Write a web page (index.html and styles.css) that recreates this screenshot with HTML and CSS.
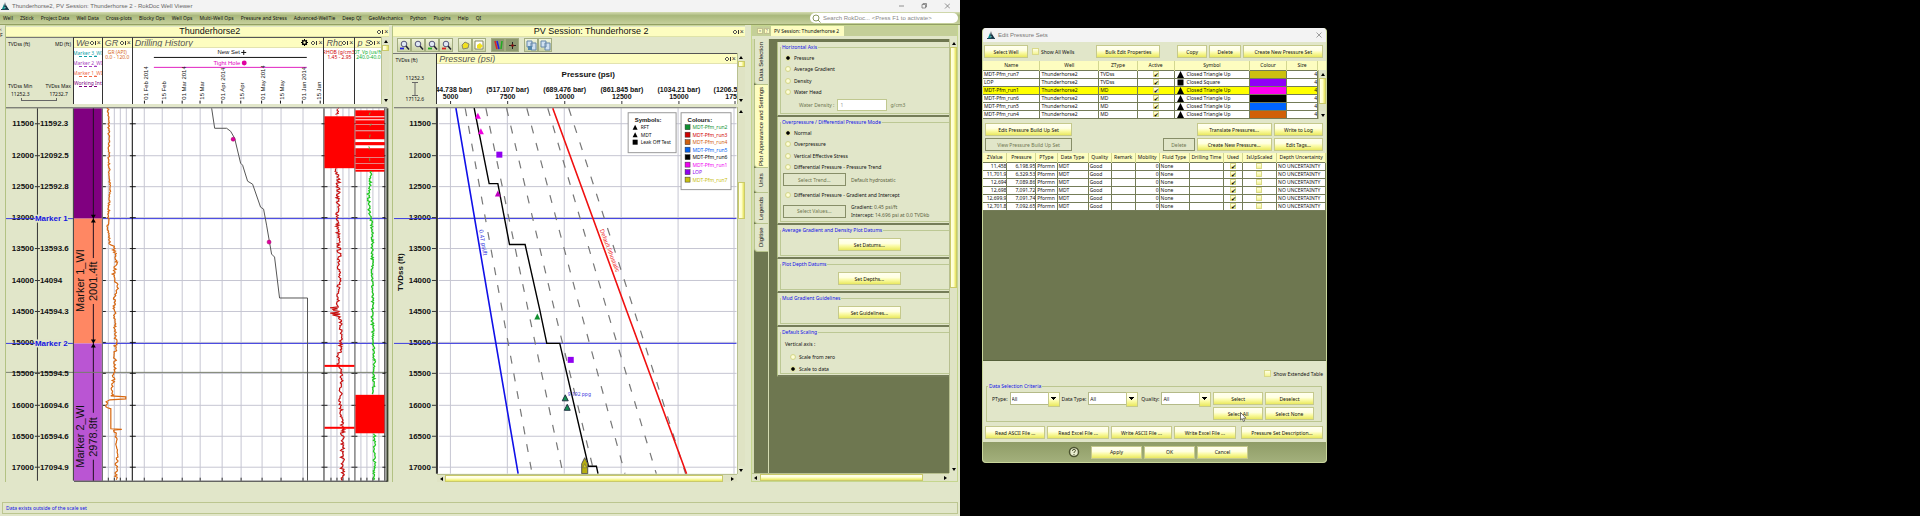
FILE: index.html
```html
<!DOCTYPE html>
<html lang="en">
<head>
<meta charset="utf-8">
<title>Thunderhorse2, PV Session: Thunderhorse 2 - RokDoc Well Viewer</title>
<link rel="stylesheet" href="styles.css">
</head>
<body>
<main class="app">
  <header class="titlebar">
    <svg class="logo" viewBox="0 0 8 8"><path d="M4 0L5 5H3Z" fill="#123"/><path d="M3 2L1 7H4Z" fill="#0a8a8a"/><path d="M5 3L7.500 7H4Z" fill="#134"/><path d="M0 7h8v1H0z" fill="#245"/></svg>
    <span class="grow">Thunderhorse2, PV Session: Thunderhorse 2 - RokDoc Well Viewer</span>
    <svg class="winctl" viewBox="0 0 52 8" fill="none" stroke="#777" stroke-width=".8"><path d="M1 4h5M24 2.500h3.500v3.500h-3.500zM25 2.500v-1h3.500v3.500h-1M47 1.500l5 5M52 1.500l-5 5"/></svg>
  </header>
  <nav class="menubar">
    <a href="#">Well</a><a href="#">ZStick</a><a href="#">Project Data</a><a href="#">Well Data</a><a href="#">Cross-plots</a><a href="#">Blocky Ops</a><a href="#">Well Ops</a><a href="#">Multi-Well Ops</a><a href="#">Pressure and Stress</a><a href="#">Advanced-WellTie</a><a href="#">Deep QI</a><a href="#">GeoMechanics</a><a href="#">Python</a><a href="#">Plugins</a><a href="#">Help</a><a href="#">QI</a>
    <label class="search"><svg viewBox="0 0 9 9" fill="none" stroke="#8a9860"><circle cx="4" cy="4" r="3"/><path d="M6 6l2.500 2.500"/></svg><input type="text" aria-label="Search" placeholder="Search RokDoc... &lt;Press F1 to activate&gt;"></label>
  </nav>
  <div class="workspace">
    <div class="gutter"><span>‹</span><span>F</span></div>
    <section class="pane well">
      <h2 class="panetitle"><span>Thunderhorse2</span><i class="ctl"></i></h2>
      <div class="wellhead">
        <div class="axishead">
          <div class="row"><span>TVDss (ft)</span><span>MD (ft)</span></div>
          <div class="row end"><span>TVDss Min</span><span>TVDss Max</span></div>
          <div class="row vals"><span>11252.3</span><span>17232.7</span></div>
          <div class="bracket"></div>
        </div>
        <div class="track"><h3>We<i class="ctl"></i></h3><div class="marks"><b class="m3">Marker 3_WI</b><b class="m2">Marker 2_WI</b><b class="m1">Marker 1_WI</b><b class="mw">Working Int</b></div></div>
        <div class="track"><h3>GR<i class="ctl"></i></h3><p class="gr">GR (API)<br>0.0 - 120.0</p></div>
        <div class="track"><h3>Drilling History<svg class="gear" viewBox="0 0 8 8"><circle cx="4" cy="4" r="2.200" fill="none" stroke="#000" stroke-width="1.600"/><path d="M4 0v8M0 4h8M1.200 1.200l5.600 5.600M6.800 1.200L1.200 6.800" stroke="#000" stroke-dasharray="1.500 5" stroke-width="1.200"/></svg><i class="ctl"></i></h3><svg class="plot" id="dates" viewBox="132 48 192 56"></svg></div>
        <div class="track"><h3>Rho<i class="ctl"></i></h3><p class="rho">RHOB (g/cm3)<br>1.45 - 2.95</p></div>
        <div class="track"><h3>p S<i class="ctl"></i></h3><p class="dt">DT_Vp (us/ft)<br>240.0-40.0</p></div>
        <div class="vbar"><i class="up"></i><i class="thumb short"></i><i class="down"></i></div>
      </div>
      <div class="wellbody"><svg class="plot" id="wellplot" viewBox="6 107 384 375"></svg></div>
    </section>
    <section class="pane pv">
      <h2 class="panetitle"><span>PV Session: Thunderhorse 2</span><i class="ctl"></i></h2>
      <div class="toolbar" id="tools"></div>
      <div class="pvhead">
        <div class="axishead narrow">
          <span>TVDss (ft)</span>
          <div class="range"><span>11252.3</span><svg viewBox="0 0 6 14" fill="none" stroke="#666"><path d="M0 .5h6M3 0v14M0 13.500h6"/></svg><span>17112.6</span></div>
        </div>
        <div class="track"><h3>Pressure (psi)<i class="ctl"></i></h3><svg class="plot" id="pvaxis" viewBox="437 64 299 40"></svg></div>
        <div class="vbar"><i class="up"></i><i class="thumb short"></i><i class="down"></i></div>
      </div>
      <div class="pvbody">
        <svg class="plot" id="pvplot" viewBox="393 107 344 367"></svg>
        <div class="vbar"><i class="up"></i><i class="space"></i><i class="thumb"></i><i class="space two"></i><i class="down"></i></div>
      </div>
      <div class="hbar pvscroll"><i class="left"></i><i class="thumb"></i><i class="rest"></i><i class="right"></i></div>
    </section>
    <section class="pane side">
      <div class="doctab"><i class="x">×</i><i class="x">?</i><span>PV Session: Thunderhorse 2</span></div>
      <div class="sidemain">
        <div class="vtabs"><button class="t1">Data Selection</button><button class="t2">Plot Appearance and Settings</button><button class="t3">Units</button><button class="t4">Legends</button><button class="t5">Digitise</button></div>
        <form class="settings">
          <fieldset class="g1"><legend>Horizontal Axis</legend>
            <label><input type="radio" name="ax" checked>Pressure</label>
            <label><input type="radio" name="ax">Average Gradient</label>
            <label><input type="radio" name="ax">Density</label>
            <label><input type="radio" name="ax">Water Head</label>
            <div class="water"><label for="wd">Water Density :</label><input id="wd" type="text" value="1" disabled><span>g/cm3</span></div>
          </fieldset>
          <fieldset class="g2"><legend>Overpressure / Differential Pressure Mode</legend>
            <label><input type="radio" name="md" checked>Normal</label>
            <label><input type="radio" name="md">Overpressure</label>
            <label><input type="radio" name="md">Vertical Effective Stress</label>
            <label><input type="radio" name="md">Differential Pressure - Pressure Trend</label>
            <div class="opt"><button type="button" class="btn off">Select Trend...</button><span>Default hydrostatic</span></div>
            <label class="tall"><input type="radio" name="md">Differential Pressure - Gradient and Intercept</label>
            <div class="opt"><button type="button" class="btn off">Select Values...</button><span><b>Gradient:</b> 0.45 psi/ft<br><b>Intercept:</b> 14.696 psi at 0.0 TVDkb</span></div>
          </fieldset>
          <fieldset class="g3"><legend>Average Gradient and Density Plot Datums</legend><button type="button" class="btn">Set Datums...</button></fieldset>
          <fieldset class="g3"><legend>Plot Depth Datums</legend><button type="button" class="btn">Set Depths...</button></fieldset>
          <fieldset class="g3"><legend>Mud Gradient Guidelines</legend><button type="button" class="btn">Set Guidelines...</button></fieldset>
          <fieldset class="g6"><legend>Default Scaling</legend><p>Vertical axis :</p>
            <label><input type="radio" name="sc">Scale from zero</label>
            <label><input type="radio" name="sc" checked>Scale to data</label>
          </fieldset>
        </form>
        <div class="vbar"><i class="up"></i><i class="thumb long"></i><i class="down"></i></div>
      </div>
      <div class="hbar sidescroll"><i class="left"></i><i class="thumb"></i><i class="rest"></i><i class="right"></i></div>
    </section>
  </div>
  <footer class="status"><p>Data exists outside of the scale set</p></footer>
</main>
<div class="desk">
  <section class="dialog">
    <header class="dlgtitle"><svg class="logo" viewBox="0 0 8 8"><path d="M4 0L5 5H3Z" fill="#123"/><path d="M3 2L1 7H4Z" fill="#0a8a8a"/><path d="M5 3L7.500 7H4Z" fill="#134"/><path d="M0 7h8v1H0z" fill="#245"/></svg><span class="grow">Edit Pressure Sets</span><svg class="close" viewBox="0 0 6 6" stroke="#888" stroke-width=".8"><path d="M.5 .5l5 5M5.500 .5l-5 5"/></svg></header>
    <div class="bar1"><button class="btn w44">Select Well</button><label class="chk"><input type="checkbox">Show All Wells</label><button class="btn w64 bulk">Bulk Edit Properties</button><button class="btn w30">Copy</button><button class="btn w32">Delete</button><button class="btn w80">Create New Pressure Set</button></div>
    <div class="sets">
      <table id="sets"><colgroup><col style="width:17%"><col style="width:17.600%"><col style="width:11.500%"><col style="width:11%"><col style="width:22.600%"><col style="width:11%"><col></colgroup>
        <thead><tr><th>Name</th><th>Well</th><th>ZType</th><th>Active</th><th>Symbol</th><th>Colour</th><th>Size</th></tr></thead>
        <tbody></tbody></table>
      <div class="vbar"><i class="up"></i><i class="thumb"></i><i class="space"></i><i class="down"></i></div>
    </div>
    <div class="bar2">
      <button class="btn">Edit Pressure Build Up Set</button><button class="btn c3">Translate Pressures...</button><button class="btn">Write to Log</button>
      <button class="btn off">View Pressure Build Up Set</button><button class="btn off c2">Delete</button><button class="btn">Create New Pressure...</button><button class="btn">Edit Tags...</button>
    </div>
    <div class="data">
      <table id="data"><colgroup><col style="width:7%"><col style="width:8.400%"><col style="width:6.200%"><col style="width:9.100%"><col style="width:6.700%"><col style="width:7%"><col style="width:7%"><col style="width:8.800%"><col style="width:10%"><col style="width:5.500%"><col style="width:10%"><col></colgroup>
        <thead><tr><th>ZValue</th><th>Pressure</th><th>PType</th><th>Data Type</th><th>Quality</th><th>Remark</th><th>Mobility</th><th>Fluid Type</th><th>Drilling Time</th><th>Used</th><th>IsUpScaled</th><th>Depth Uncertainty</th></tr></thead>
        <tbody></tbody></table>
    </div>
    <div class="ext"><label class="chk"><input type="checkbox">Show Extended Table</label></div>
    <fieldset class="crit"><legend>Data Selection Criteria</legend>
      <label>PType: <span class="sel"><select><option>All</option></select></span></label>
      <label>Data Type: <span class="sel"><select><option>All</option></select></span></label>
      <label>Quality: <span class="sel"><select><option>All</option></select></span></label>
      <button class="btn">Select</button><button class="btn">Deselect</button>
      <button class="btn hover">Select All<svg class="cursor" viewBox="0 0 7 10"><path d="M.5 .5v7.500l1.700-1.500 1.200 3 1.300-.6-1.200-2.700h2.500z" fill="#fff" stroke="#444" stroke-width=".7"/></svg></button><button class="btn">Select None</button>
    </fieldset>
    <div class="files"><button class="btn">Read ASCII File ...</button><button class="btn">Read Excel File ...</button><button class="btn">Write ASCII File ...</button><button class="btn">Write Excel File ...</button><button class="btn wide">Pressure Set Description...</button></div>
    <footer class="dlgfoot"><svg class="help" viewBox="0 0 12 12"><circle cx="6" cy="6" r="4.500" fill="#e8ecd0" stroke="#4c5430" stroke-width="1.500"/><path d="M4.500 5q0-1.700 1.500-1.700T7.500 4.700Q7.500 5.500 6 6.300v.7M6 8v1" fill="none" stroke="#4c5430"/></svg><button class="btn">Apply</button><button class="btn">OK</button><button class="btn">Cancel</button></footer>
  </section>
</div>
<script src="script.js"></script>
</body>
</html>
```
FILE: styles.css
```css
:root {
  --panel: #e1e6c9;
  --dark: #6e7750;
  --edge: #b3c283;
  --cream: #fdfdc0;
  --ui: "Noto Sans", "Open Sans", sans-serif;
  --plot: "Liberation Sans", Arial, sans-serif;
  --yellow: linear-gradient(#fffff0, #ffffe0 40%, #fafaa0 65%, #e9e860);
}
* { box-sizing: border-box; }
body { margin: 0; background: #000; display: flex; min-height: 100vh; font: 5px/8px var(--ui); color: #111; }
h2, h3, p { margin: 0; font-weight: normal; }
button, input, select { font: inherit; color: inherit; margin: 0; padding: 0; }
i { font-style: normal; }
a { color: inherit; text-decoration: none; }
.grow { flex: 1; }
.app { flex: 0 0 50%; min-width: 0; display: flex; flex-direction: column; background: var(--panel); height: 100vh; }
.titlebar { flex: 0 0 12px; display: flex; align-items: center; gap: 3px; padding: 0 10px 0 1px; background: #f3f3f3; color: #666; font: 6px/8px var(--plot); }
.logo { width: 8px; height: 8px; }
.winctl { width: 52px; height: 8px; }
.menubar { flex: 0 0 13px; display: flex; align-items: center; gap: 7px; padding: 0 2px 0 3px; background: linear-gradient(#d5dcb2, #a9b87c 30%, #c6d09c); white-space: nowrap; border-bottom: 1px solid #93a064; }
.search { margin-left: auto; width: 148px; height: 10px; display: flex; align-items: center; gap: 2px; padding: 0 2px; border-radius: 5px; background: #fff; }
.search svg { width: 9px; height: 9px; }
.search input { flex: 1; min-width: 0; border: 0; background: none; font: 6px/8px var(--plot); }
.search input::placeholder { color: #888; opacity: 1; }
.workspace { flex: 1; min-height: 0; display: flex; padding-right: 2px; }
.gutter { flex: 0 0 5px; display: flex; flex-direction: column; line-height: 6px; padding-top: 1px; }
.pane { min-width: 0; display: flex; flex-direction: column; padding-top: 2px; border-top: 1px solid #c9d69b; }
.well { flex: 385 1 0; border-left: 1px solid var(--edge); }
.pv { flex: 353 1 0; margin-left: 3px; border-left: 1px solid var(--edge); }
.side { flex: 206 1 0; margin-left: 6px; border: 1px solid #c5d68e; }
.well, .pv { padding-top: 1px; }
.panetitle { flex: 0 0 10px; background: var(--cream); font: 9px/9px var(--plot); color: #111; display: flex; justify-content: center; position: relative; border-bottom: 1px solid #dfe3a8; padding-left: 24px; }
.pv .panetitle { padding-left: 44px; }
.ctl { position: absolute; right: 1px; top: 3px; width: 11px; height: 4px; background: linear-gradient(#333, #333) 5px 0/1px 4px no-repeat, radial-gradient(circle, transparent 1px, #555 1px, #555 2px, transparent 2px) 0 0/4px 4px no-repeat; }
.ctl::after { content: "×"; position: absolute; right: 0; top: -2px; font: 7px/7px var(--plot); color: #333; }
.wellhead { flex: 0 0 67px; display: grid; grid-template-columns: 67fr 29fr 30fr 192fr 31fr 27fr 8fr; }
.axishead { padding: 2px 2px 0 2px; border-top: 1px solid #777; display: flex; flex-direction: column; }
.row { display: flex; justify-content: space-between; }
.end { margin-top: auto; }
.vals { padding: 0 3px; }
.bracket { height: 3px; margin: 0 14px 3px 13px; border: solid #666; border-width: 0 1px 1px; }
.track { min-width: 0; overflow: hidden; background: #fff; border-left: 1px solid #333; border-top: 1px solid #555; }
.track h3 { height: 10px; background: var(--cream); color: #555; font: italic 9px/11px var(--plot); position: relative; padding-left: 2px; white-space: nowrap; overflow: hidden; border-bottom: 1px solid #e3e3b0; }
.track h3 .ctl { background-color: var(--cream); }
.gear { position: absolute; right: 15px; top: 1px; width: 7px; height: 7px; }
.track p { line-height: 5px; white-space: nowrap; padding-top: 2px; display: flow-root; }
.track p, .marks { margin: 0 -12px; text-align: center; }
.gr { color: #d86820; }
.rho { color: #d00000; }
.dt { color: #10b030; }
.marks { padding-top: 1px; }
.marks b { display: block; font-weight: normal; height: 8px; margin-bottom: 2px; }
.marks b::after { content: ""; display: block; width: 18px; margin: -1px auto 0; border-top: 1px dashed; }
.m3 { color: #10a0a8; } .m2 { color: #a840c0; } .m1 { color: #f06848; } .mw { color: #800080; }
.plot { display: block; width: 100%; font-family: var(--plot); }
.plot .small { font: 5px var(--ui); }
.wellbody { flex: 1; min-height: 0; margin-top: 3px; }
.wellbody .plot, .pvbody .plot { height: 100%; }
.vbar { display: flex; flex-direction: column; background: #dfe3c4; border-left: 1px solid #b8c090; }
.up, .down { flex: 0 0 8px; background: var(--panel); display: grid; place-items: center; }
.up::after, .down::after { content: ""; border: solid transparent; border-width: 0 2px 3px; border-bottom-color: #000; }
.down::after { transform: rotate(180deg); }
.thumb { border: 1px solid #c9c96a; background: linear-gradient(90deg, #ffffe8, #ffffc8 50%, #e6e258); }
.short { flex: 0 0 6px; margin-bottom: auto; }
.toolbar { flex: 0 0 16px; display: flex; align-items: center; padding: 0 0 0 4px; }
.toolbar button { width: 14px; height: 14px; border: 1px solid #a3ad80; background: linear-gradient(#f2f5dc, #c9d2a4); display: grid; place-items: center; }
.toolbar button.gap { margin-left: 5px; }
.toolbar button.on { background: #8e9970; }
.toolbar svg { width: 11px; height: 11px; }
.pvhead { flex: 0 0 51px; display: grid; grid-template-columns: 43fr 301fr 8fr; }
.narrow .range { display: flex; flex-direction: column; align-items: center; line-height: 7px; margin-top: auto; padding-bottom: 1px; }
.range svg { width: 6px; height: 14px; }
.pvbody { flex: 1; min-height: 0; margin-top: 3px; display: grid; grid-template-columns: 344fr 8fr; }
.space { flex: 7 1 0; }
.pvbody .space { flex: 67 1 0; }
.pvbody .space.two { flex: 248 1 0; }
.pvbody .thumb { flex: 35 1 0; }
.hbar { flex: 0 0 8px; display: flex; background: #dfe3c4; border-top: 1px solid #b8c090; }
.hbar .thumb { background: var(--yellow); }
.left, .right { flex: 0 0 8px; display: grid; place-items: center; }
.left::after, .right::after { content: ""; border: solid transparent; border-width: 2px 3px 2px 0; border-right-color: #000; }
.right::after { transform: rotate(180deg); }
.pvscroll { margin: 0 8px 0 44px; }
.pvscroll .thumb { flex: 279 1 0; }
.pvscroll .rest { flex: 6 1 0; }
.sidescroll { margin-right: 8px; }
.sidescroll .thumb { flex: 163 1 0; }
.sidescroll .rest { flex: 18 1 0; }
.side { padding: 0; }
.doctab { flex: 0 0 10px; display: flex; align-items: center; gap: 1px; background: #c4cf98; }
.doctab span { background: var(--cream); padding: 0 5px 0 3px; line-height: 10px; }
.doctab::before { content: ""; width: 4px; }
.x { width: 6px; height: 6px; border: 1px solid #c0c090; background: var(--cream); line-height: 4px; text-align: center; color: #888; }
.sidemain { flex: 1; min-height: 0; display: flex; margin-top: 3px; background: var(--dark); border-left: 2px solid #d5dcb2; }
.vtabs { flex: 0 0 15px; border-right: 1px solid #d5dcb2; display: flex; flex-direction: column; }
.vtabs button { writing-mode: vertical-rl; transform: rotate(180deg); border: 1px solid #b8c48c; border-width: 1px 1px 0 0; border-radius: 0 4px 0 0; background: var(--panel); font: 6px/13px var(--plot); }
.t1 { height: 46px; } .t2 { height: 83px; } .t3 { height: 25px; } .t4 { height: 31px; } .t5 { height: 28px; }
.vtabs .t2 { background: var(--cream); }
.settings { flex: 1; min-width: 0; margin: 3px 0 0 8px; }
.sidemain .vbar { flex: 0 0 8px; }
.long { flex: 240 1 0; margin-bottom: 177px; }
fieldset { min-width: 0; margin: 0; border: 0; padding: 0; }
.settings fieldset { position: relative; background: var(--panel); border-bottom: 2px solid #747c58; border-left: 1px solid var(--edge); padding: 10px 0 0 7px; }
.settings fieldset::before { content: ""; position: absolute; left: 2px; right: 0; top: 5px; bottom: 1px; border: 1px solid #bcc894; border-right: 0; pointer-events: none; }
.settings legend { float: left; margin: -9px 0 0 -4px; padding: 0 1px; background: var(--panel); color: #1111e8; position: relative; line-height: 8px; }
.settings legend + * { clear: both; }
.settings label { display: flex; align-items: center; gap: 3px; height: 11px; margin-bottom: 0; }
.g1 { height: 75px; } .g2 { height: 108px; } .g3 { height: 34px; } .g6 { height: 50px; }
.g1 > label:nth-of-type(even), .g2 > label:nth-of-type(even) { height: 12px; }
.settings .tall { height: 17px; }
input[type=radio] { appearance: none; width: 6px; height: 6px; border-radius: 3px; background: radial-gradient(#ffffe8, #f6f6b0); border: 1px solid #d4d68e; }
input[type=radio]:checked { background: #000; border-color: #e4e6a0; background-clip: padding-box; }
.water { display: flex; align-items: center; height: 14px; gap: 3px; color: #6f7650; margin-left: 14px; }
.settings .water label { height: 12px; }
.water input { width: 50px; height: 12px; border: 1px solid #c0c890; background: #fff; padding-left: 2px; color: #999; }
.opt { display: flex; align-items: center; gap: 5px; color: #5b6240; line-height: 8px; }
.opt b { font-weight: normal; color: #222; }
.btn { height: 13px; border: 1px solid #c5c98c; background: var(--yellow); color: #111; display: block; white-space: nowrap; line-height: 10px; }
.btn.off { background: var(--panel); border-color: #878e68; color: #6f7650; }
.opt .btn { width: 63px; margin-left: -2px; }
.g3 .btn { width: 63px; margin: 3px auto 0 53px; }
.g6 p { line-height: 14px; padding-left: 0; }
.g6 label { padding-left: 5px; }
.settings .g6 label { height: 12px; }
.status { flex: 0 0 34px; padding: 20px 2px 2px; }
.status p { border: 1px solid #bcc690; height: 12px; line-height: 10px; padding-left: 3px; color: #1111e8; }
.desk { flex: 1; min-width: 0; padding: 28px 0 53px 22px; display: flex; }
.dialog { width: 36.800%; min-width: 344px; background: var(--panel); border-radius: 4px; overflow: hidden; display: flex; flex-direction: column; border: 1px solid #c9d69b; border-top: 0; }
.dlgtitle { flex: 0 0 14px; background: #f3f3f3; color: #777; font: 6px/8px var(--plot); display: flex; align-items: center; gap: 3px; padding: 0 4px; }
.close { width: 6px; height: 6px; }
.bar1 { display: flex; align-items: center; gap: 2px; padding: 3px 3px 3px 1px; }
.chk { display: flex; align-items: center; gap: 2px; }
.bar1 .chk { margin-left: 2px; }
input[type=checkbox] { appearance: none; width: 7px; height: 7px; border: 1px solid #d9d98a; background: linear-gradient(#ffffe8, #f4f490); position: relative; flex: none; }
input[type=checkbox]:checked::before { content: "✔"; position: absolute; left: 0; top: -1px; font: 6px/7px "DejaVu Sans", sans-serif; color: #000; }
.w44 { width: 44px; } .w30 { width: 30px; margin-left: auto; } .w32 { width: 32px; } .w80 { width: 80px; }
.w64 { width: 64px; } .bulk { margin-left: 20px; }
table { border-collapse: collapse; table-layout: fixed; width: 100%; background: #fff; line-height: 7px; }
th { height: 9px; background: var(--cream); font-weight: normal; border-right: 1px solid #d3d790; padding: 0; }
td { height: 8px; border: solid #747c58; border-width: 1px 1px 1px 0; padding: 0 0 0 1px; white-space: nowrap; overflow: hidden; }
th { white-space: nowrap; }
td.n { text-align: right; padding: 0; }
td.c { text-align: center; padding: 0; line-height: 0; }
td.c input { vertical-align: middle; width: 6px; height: 6px; }
td.s svg { width: 7px; height: 7px; margin: 0 3px 0 1px; vertical-align: top; }
tr.on td { background: #ffff00; }
.sets { display: grid; grid-template-columns: 334fr 8fr; background: var(--cream); height: 58px; overflow: hidden; }
.sets .vbar { margin-top: 9px; }
.sets .thumb { flex: 26 1 0; }
.bar2 { display: grid; grid-template-columns: 88fr 88fr 32fr 76fr 50fr; gap: 2px; padding: 4px 3px 2px 2px; }
.c3 { grid-column: 4; }
.c2 { grid-column: 3; }
.data { flex: 1; background: var(--dark); border-bottom: 1px solid #55603a; }
.ext { height: 25px; display: flex; align-items: center; justify-content: flex-end; padding: 0 3px; }
.crit { position: relative; border: 1px solid #bcc690; margin: 0 4px 0 3px; padding: 5px 7px 1px 5px; display: grid; grid-template-columns: 67fr 77fr 72fr 50fr 50fr; gap: 2px; }
.crit legend { position: absolute; top: -5px; left: 1px; padding: 0 1px; background: var(--panel); color: #1111e8; }
.crit label { display: flex; align-items: center; justify-content: flex-end; gap: 2px; white-space: nowrap; }
.hover { grid-column: 4; position: relative; }
.cursor { position: absolute; left: 26px; top: 4px; width: 7px; height: 10px; }
.sel { width: 50px; height: 13px; position: relative; display: block; }
.sel select { appearance: none; width: 100%; height: 100%; background: #fff; border: 1px solid #b4ba88; padding: 0 10px 0 1px; border-radius: 0; }
.sel::after { content: ""; position: absolute; right: 0; top: 0; width: 10px; height: 13px; border: 1px solid #c5c98c; background: linear-gradient(#000, #000) 2px 4px/5px 1px no-repeat, linear-gradient(#000, #000) 3px 5px/3px 1px no-repeat, linear-gradient(#000, #000) 4px 6px/1px 1px no-repeat, var(--yellow); pointer-events: none; }
.files { display: grid; grid-template-columns: 60fr 61fr 61fr 61fr 85fr; gap: 2px; padding: 4px 3px 3px 2px; }
.wide { margin-left: 3px; }
.dlgfoot { flex: 0 0 20px; display: flex; align-items: center; gap: 2px; background: linear-gradient(#8f9c66, #a3b07c); padding-left: 85px; }
.dlgfoot .btn { width: 51px; }
.help { width: 12px; height: 12px; margin-right: 9px; }
```
FILE: script.js
```js
const make = (tag, attrs, text) => {
  const a = Object.entries(attrs).map(([k, v]) => `${k}="${v}"`).join(" ");
  return `<${tag} ${a}>${text === undefined ? "" : text}</${tag}>`;
};
const line = (x1, y1, x2, y2, stroke, extra = {}) => make("line", { x1, y1, x2, y2, stroke, ...extra });
const rect = (x, y, width, height, fill, extra = {}) => make("rect", { x, y, width, height, fill, ...extra });
const text = (x, y, size, s, extra = {}) => make("text", { x, y, "font-size": size, ...extra }, s);
const small = (x, y, s, fill, extra = {}) => make("text", { x, y, class: "small", fill, ...extra }, s);
const path = (pts, stroke, w = 1, extra = {}) =>
  make("polyline", { points: pts.map(p => p.join(",")).join(" "), fill: "none", stroke, "stroke-width": w, ...extra });
const tri = (x, y, r, fill, extra = {}) => make("path", { d: `M${x} ${y - r}L${x + r} ${y + r}H${x - r}Z`, fill, ...extra });
const depthY = d => Math.round(123.3 + (d - 11500) / 16) + 0.5;
const bold = { "font-weight": "bold", fill: "#111" };

let seed = 7;
const rnd = () => (seed = (seed * 16807) % 2147483647) / 2147483647;
function noisy(anchors, amp, step) {
  const out = [];
  for (let i = 0; i < anchors.length - 1; i++) {
    const [x0, y0] = anchors[i], [x1, y1] = anchors[i + 1];
    for (let y = y0; y < y1; y += step) {
      const t = (y - y0) / (y1 - y0);
      out.push([(x0 + (x1 - x0) * t + (rnd() - 0.5) * amp).toFixed(1), y.toFixed(1)]);
    }
  }
  return out;
}

const dates = [["01 Feb 2014", 144], ["15 Feb", 162], ["01 Mar 2014", 182], ["15 Mar", 200], ["01 Apr 2014", 222], ["15 Apr", 241], ["01 May 2014", 262], ["15 May", 281], ["01 Jun 2014", 303], ["15 Jun", 321]];

function drawDates() {
  let s = text(217, 54, 6, "New Set", { fill: "#111" }) + line(241, 52.5, 246, 52.5, "#111") + line(243.5, 50, 243.5, 55, "#111");
  s += line(153, 57.5, 307, 57.5, "#111");
  s += text(213, 65, 6, "Tight Hole", { fill: "#e000c0" }) + make("circle", { cx: 244, cy: 63, r: 2.5, fill: "#e000a0" });
  s += line(153, 67.5, 307, 67.5, "#e020c0");
  dates.forEach(([d, x]) => {
    const tx = Math.min(x + 3, 321);
    s += text(tx, 100, 6, d, { fill: "#111", transform: `rotate(-90 ${tx} 100)` }) + line(x - 0.5, 101, x - 0.5, 104, "#111");
  });
  document.getElementById("dates").innerHTML = s;
}

function drawWell() {
  let s = rect(5, 107, 68, 375, "#e1e6c9") + rect(73, 107, 315, 375, "#fff");
  const grid = "#c6c6d2";
  for (let d = 11500; d <= 17000; d += 500) s += line(103, depthY(d), 386, depthY(d), grid);
  [108, 114, 120, 126, 331, 337, 343, 349, 361, 367, 373, 379].concat(dates.map(d => d[1]).slice(0, 9))
    .forEach(x => { s += line(x + 0.5, 108, x + 0.5, 481, grid) + line(x + 0.5, 478, x + 0.5, 481, "#333"); });
  s += rect(74, 108, 28, 110.5, "#800080") + rect(74, 218.5, 28, 125, "#ff8763") + rect(74, 343.5, 28, 137.5, "#ba55d3");
  s += line(93.5, 108, 93.5, 258, "#201020") + line(93.5, 304, 93.5, 413, "#201020") + line(93.5, 460, 93.5, 481, "#201020");
  [[216.500, 1], [220.500, -1], [341.500, 1], [345.500, -1]].forEach(([y, k]) => {
    s += make("path", { d: `M91 ${y - k * 2}h5l-2.500 ${k * 4}z`, fill: "#000" });
  });
  [["Marker 1_WI", 312, 84], ["2001.4ft", 301, 97], ["Marker 2_WI", 468, 84], ["2978.8ft", 457, 97]].forEach(([t, y, x]) => {
    s += text(x, y, 11, t, { fill: "#111", transform: `rotate(-90 ${x} ${y})` });
  });
  s += line(6, 372.5, 388, 372.5, "#777d6c");
  s += line(37.5, 108, 37.5, 481, "#333");
  const md = ["11592.3", "12092.5", "12592.8", "", "13593.6", "14094", "14594.3", "", "15594.5", "16094.6", "16594.6", "17094.9"];
  md.forEach((m, i) => {
    const y = depthY(11500 + 500 * i);
    s += line(35, y, 40, y, "#333") + text(34, y + 2.5, 8, 11500 + 500 * i, { ...bold, "text-anchor": "end" }) + text(40, y + 2.5, 8, m, bold);
    [103, 130, 133, 322, 325, 352, 355, 383].forEach(x => { s += line(x, y, x + 3, y, "#222"); });
  });
  [[218.500, "Marker 1"], [343.500, "Marker 2"]].forEach(([y, t]) => {
    s += line(6, y, 73, y, "#3a3ae0") + line(103, y, 388, y, "#3a3ae0") + rect(35, y - 4, 33, 8, "#e1e6c9") + text(35, y + 2.5, 8, t, { "font-weight": "bold", fill: "#1414e0" });
  });
  [[73.5, "#333"], [102.5, "#555"], [132.5, "#000"], [324.5, "#222"], [355.5, "#444"], [385.5, "#111"]].forEach(([x, c]) => { s += line(x, 108, x, 481, c); });
  s += rect(387, 108, 2, 374, "#3c4430");
  s += line(6, 107.5, 388, 107.5, "#555") + line(74, 481.5, 388, 481.5, "#222");
  s += path(noisy([[108, 108], [109, 125], [109, 160], [110, 190], [108, 225], [110, 245]], 2, 1.2)
    .concat(noisy([[113, 245], [117, 262], [113, 277], [118, 286], [114, 300], [116, 340], [115, 365], [112, 395]], 3, 1.2))
    .concat([[111, 396], [126, 397], [126, 399], [110, 400]]).concat(noisy([[108, 402], [108, 408]], 4, 1.2))
    .concat([[111, 409], [111, 429], [122, 429.5], [115, 430]]).concat(noisy([[115, 431], [117, 450], [116, 481]], 3, 1.2)), "#d86810", 1.2);
  s += path([[212, 108], [215, 128], [227, 128], [231, 131], [235, 138], [241, 163], [243, 165], [248, 181], [253, 184], [261, 207], [264, 209], [267, 225], [272, 254], [275, 257], [280, 298], [308, 298], [308, 481]], "#555");
  s += make("circle", { cx: 233.5, cy: 139, r: 2, fill: "#e000a0", stroke: "#a00060", "stroke-width": 0.5 }) + make("circle", { cx: 269.5, cy: 242, r: 2, fill: "#e000a0", stroke: "#a00060", "stroke-width": 0.5 });
  s += path(noisy([[338, 108], [337, 115]], 5, 1), "#d00000") + rect(325, 116, 30, 52, "#f00");
  s += path(noisy([[336, 168], [339, 180], [338, 225], [340, 260], [339, 305]], 4, 1.1)
    .concat(noisy([[335, 306], [336, 316]], 10, 0.9)).concat(noisy([[341, 317], [341, 350], [338, 362], [342, 372], [341, 400], [343, 430], [343, 481]], 4, 1.1)), "#c81010", 1.2);
  s += rect(325, 365, 30, 2, "#f00") + rect(325, 427, 30, 2, "#f00");
  s += rect(356, 110, 29, 61.5, "#f00");
  [[116, 1, "#fff"], [119, 1, "#fff"], [124, 0.7, "#dbb"], [130, 1, "#dbb"], [139, 3, "#fff"], [145, 3, "#fff"], [157, 0.7, "#dbb"], [163, 0.7, "#dbb"], [169, 0.7, "#fff"]].forEach(([y, h, c]) => { s += rect(356, y, 29, h, c); });
  s += rect(356, 142, 29, 2.5, "#f00");
  s += path(noisy([[371, 112], [370, 171]], 3, 3), "#60a040", 1, { "stroke-dasharray": "3 9" });
  s += path(noisy([[371, 171], [371, 185], [369, 195], [370, 210], [372, 222], [373, 240], [373, 320], [375, 360], [374, 395]], 2.5, 1.1), "#20c820", 1.3);
  s += rect(356, 395, 29, 38.5, "#f00") + path(noisy([[375, 434], [375, 481]], 2.5, 1.1), "#20c820", 1.3);
  document.getElementById("wellplot").innerHTML = s;
}

const psi = [[450.5, "5000", "(344.738 bar)"], [507.5, "7500", "(517.107 bar)"], [564.5, "10000", "(689.476 bar)"], [621.5, "12500", "(861.845 bar)"], [678.5, "15000", "(1034.21 bar)"], [734.5, "17500", "(1206.58 bar)"]];

function drawPv() {
  const mid = { ...bold, "text-anchor": "middle" };
  let s = text(588, 77, 8, "Pressure (psi)", mid);
  psi.forEach(([x, a, b]) => { s += text(x, 92, 7, b, mid) + text(x, 99, 7, a, mid) + line(x, 101, x, 104, "#333"); });
  document.getElementById("pvaxis").innerHTML = s;

  s = rect(393, 107, 44, 367, "#e1e6c9") + rect(437, 107, 301, 367, "#fff");
  psi.forEach(([x]) => { s += line(x, 108, x, 474, "#c6c6d2"); });
  for (let d = 11500; d <= 17000; d += 500) {
    const y = depthY(d);
    s += line(439, y, 737, y, "#c6c6d2") + line(432, y, 436, y, "#333") + text(431, y + 2.5, 8, d, { ...bold, "text-anchor": "end" });
  }
  s += text(403, 291, 8, "TVDss (ft)", { ...bold, transform: "rotate(-90 403 291)" });
  [218.500, 343.500].forEach(y => { s += line(394, y, 737, y, "#3a3ae0"); });
  s += rect(436, 107, 2, 367, "#333") + line(394, 107.5, 737, 107.5, "#666");
  [[465.3, 502.3, 532.3], [486, 528.3, 563.3], [506.7, 554.7, 594.7], [527, 580.7, 625.3], [548, 607.3, 656.7], [569, 634.3, 686]]
    .forEach(([a, b, c]) => { s += path([[a, 108], [b, 310], [c, 474]], "#777", 1.2, { "stroke-dasharray": "8 10" }); });
  s += path([[456, 108], [490.3, 310], [518.3, 474]], "#1010e8", 1.6) + path([[553, 108], [626.7, 310], [687, 474]], "#f01010", 1.6);
  s += path([[474.3, 108], [489.3, 183.5], [498, 183.5], [509.7, 244.5], [525.3, 244.5], [540, 310], [547, 343.5], [560, 343.5], [588.7, 466.5], [596.7, 466.5], [598.3, 474]], "#000", 1.4);
  s += tri(478, 115.5, 3, "#f000e0") + tri(481, 131, 3, "#f000e0") + tri(498, 193.5, 3, "#c000c0");
  s += rect(496.5, 151.5, 6, 6, "#9000f0") + rect(568, 357, 6, 6, "#9000f0");
  s += tri(537.5, 316.5, 3, "#109030") + tri(565.5, 398, 3, "#109050", { stroke: "#234" }) + tri(567.5, 407.5, 3, "#109050", { stroke: "#234" });
  s += small(568, 396, "9.192 ppg", "#4040e0");
  s += make("path", { d: "M585 458l3 6v10h-6v-10z", fill: "#b8b010", stroke: "#555" });
  s += tri(585, 466, 2, "#d8d020", { stroke: "#555", "stroke-width": 0.5 });
  s += text(479, 230, 6, "0.47 psi/ft", { fill: "#3030e0", transform: "rotate(80 479 230)" });
  s += text(600, 230, 6, "Default lithostatic", { fill: "#f02020", transform: "rotate(69 600 230)" });
  const box = { stroke: "#999" };
  s += rect(628.5, 112.5, 48, 40, "#fff", box) + text(635, 122, 6, "Symbols:", bold);
  ["RFT", "MDT", "Leak Off Test"].forEach((t, i) => {
    const y = 127 + i * 7.5;
    s += (i < 2 ? tri(635.5, y, 2.5, "#000") : rect(633, y - 2.5, 5, 5, "#000")) + small(641, y + 2, t, "#111");
  });
  s += rect(681.5, 112.5, 50, 77, "#fff", box) + text(688, 122, 6, "Colours:", bold);
  [["MDT-Pfm_run2", "#109030"], ["MDT-Pfm_run3", "#d00000"], ["MDT-Pfm_run4", "#d06010"], ["MDT-Pfm_run5", "#0060f0"], ["MDT-Pfm_run6", "#000"], ["MDT-Pfm_run1", "#f000f0"], ["LOP", "#9000f0"], ["MDT-Pfm_run7", "#c8c010"]].forEach(([t, c], i) => {
    const y = 127 + i * 7.5;
    s += rect(685.5, y - 2.5, 5, 5, c, { stroke: "#333", "stroke-width": 0.5 }) + small(693, y + 2, t, c);
  });
  document.getElementById("pvplot").innerHTML = s;
}

function drawTools() {
  const lens = c => `<circle cx="5" cy="4" r="2.800" fill="#dfe8f4" stroke="#557" /><path d="M7 6l3 3.500" stroke="#223" stroke-width="1.500"/>${c ? `<path d="M1 8.500h4" stroke="${c}" stroke-width="1.800"/>` : ""}`;
  const page = '<path d="M1 1h5v6H1zM5 3h5v7H5z" fill="#cfe0f0" stroke="#68a"/>';
  const icons = [lens("#22d"), lens(""), lens("#2a2"), lens("#d22"),
    '<path d="M2 5l3-3 4 2-1 4-5 1z" fill="#f0e020" stroke="#886"/>', '<path d="M1 1h8v8H1z" fill="#fff" stroke="#886"/><path d="M3 5l3-2 3 3-3 3-3-1z" fill="#f0e020"/>',
    '<path d="M2 1l2 8" stroke="#d22" stroke-width="1.500"/><path d="M4 1l2 8" stroke="#22d" stroke-width="1.500"/><path d="M9 1L8 9" stroke="#2a2" stroke-width="1.500"/>',
    '<path d="M2 5.500h7M5.500 2v7" stroke="#222"/><circle cx="5.500" cy="5.500" r="1.300" fill="#811"/>', page + '<path d="M2 6h4v4H2z" fill="#58a"/>', page];
  const names = ["Zoom area", "Zoom", "Zoom in", "Zoom out", "Select", "Select box", "Lines", "Crosshair", "Copy view", "Copy"];
  document.getElementById("tools").innerHTML = icons.map((p, i) =>
    `<button aria-label="${names[i]}" class="${[4, 6, 8].includes(i) ? "gap" : ""} ${i === 6 || i === 7 ? "on" : ""}"><svg viewBox="0 0 11 11" fill="none">${p}</svg></button>`).join("");
}

function fillTables() {
  const sets = [["MDT-Pfm_run7", "TVDss", "#ccc010"], ["LOP", "TVDss", "#9000f8"], ["MDT-Pfm_run1", "MD", "#ff00f0"], ["MDT-Pfm_run6", "MD", "#000"], ["MDT-Pfm_run5", "MD", "#0064ff"], ["MDT-Pfm_run4", "MD", "#d06008"]];
  document.querySelector("#sets tbody").innerHTML = sets.map(([n, z, c]) => {
    const sq = n === "LOP";
    return `<tr class="${n.endsWith("run1") ? "on" : ""}"><td>${n}</td><td>Thunderhorse2</td><td>${z}</td><td class="c"><input type="checkbox" aria-label="Active" checked></td><td class="s"><svg viewBox="0 0 7 7"><path d="${sq ? "M.5 .5h6v6h-6z" : "M3.500 0L7 7H0z"}"/></svg>${sq ? "Closed Square" : "Closed Triangle Up"}</td><td style="background:${c}"></td><td class="n">4</td></tr>`;
  }).join("");
  const data = [["11,458", "6,198.95"], ["11,701.9", "6,329.53"], ["12,694", "7,089.86"], ["12,698", "7,091.72"], ["12,699.9", "7,091.74"], ["12,701.8", "7,092.65"]];
  document.querySelector("#data tbody").innerHTML = data.map(([z, p]) =>
    `<tr><td class="n">${z}</td><td class="n">${p}</td><td>Pformn</td><td>MDT</td><td>Good</td><td></td><td class="n">0</td><td>None</td><td></td><td class="c"><input type="checkbox" aria-label="Used" checked></td><td class="c"><input type="checkbox" aria-label="IsUpScaled"></td><td>NO UNCERTAINTY</td></tr>`).join("");
}

drawDates();
drawWell();
drawPv();
drawTools();
fillTables();
```
